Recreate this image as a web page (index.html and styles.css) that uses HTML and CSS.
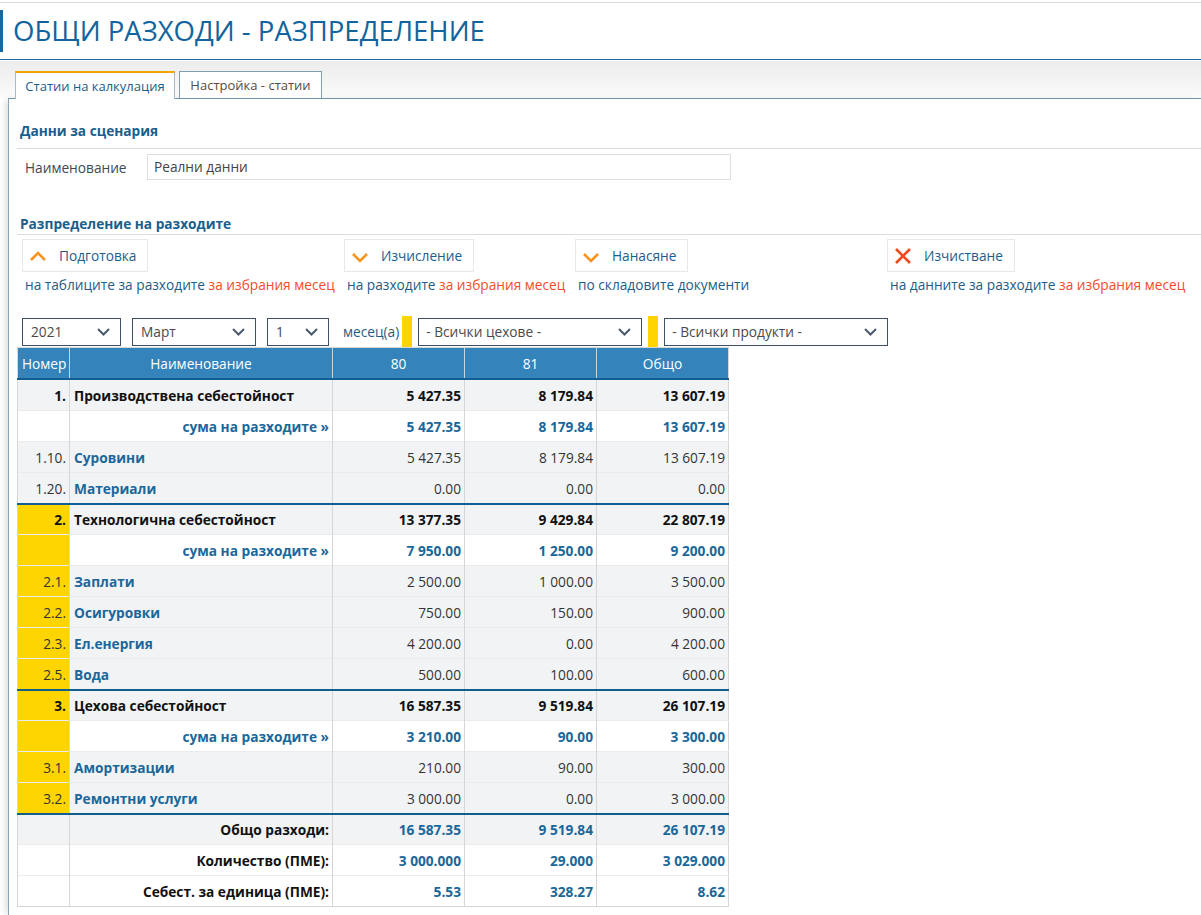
FILE: index.html
```html
<!DOCTYPE html>
<html lang="bg">
<head>
<meta charset="utf-8">
<title>Общи разходи - разпределение</title>
<link rel="stylesheet" href="styles.css">
</head>
<body>
<div class="page">
  <header class="header">
    <h1 class="title">ОБЩИ РАЗХОДИ - РАЗПРЕДЕЛЕНИЕ</h1>
  </header>
  <div class="tabbar">
    <div class="tab tab-active">Статии на калкулация</div>
    <div class="tab tab-2">Настройка - статии</div>
  </div>
  <div class="panel">
    <div class="section-title">Данни за сценария</div>
    <div class="form-row">
      <label class="form-label">Наименование</label>
      <div class="input">Реални данни</div>
    </div>

    <div class="section-title section-2">Разпределение на разходите</div>
    <div class="actions">
      <div class="action">
        <div class="btn"><svg class="ico" width="18" height="12" viewBox="0 0 18 12"><path d="M2 10 L9 3 L16 10" fill="none" stroke="#f7941d" stroke-width="2.6"/></svg>Подготовка</div>
        <div class="desc">на таблиците за разходите <span class="red">за избрания месец</span></div>
      </div>
      <div class="action">
        <div class="btn"><svg class="ico down" width="18" height="12" viewBox="0 0 18 12"><path d="M2 2 L9 9 L16 2" fill="none" stroke="#f7941d" stroke-width="2.6"/></svg>Изчисление</div>
        <div class="desc">на разходите <span class="red">за избрания месец</span></div>
      </div>
      <div class="action">
        <div class="btn"><svg class="ico down" width="18" height="12" viewBox="0 0 18 12"><path d="M2 2 L9 9 L16 2" fill="none" stroke="#f7941d" stroke-width="2.6"/></svg>Нанасяне</div>
        <div class="desc">по складовите документи</div>
      </div>
      <div class="action">
        <div class="btn"><svg class="ico" width="18" height="18" viewBox="0 0 18 18"><path d="M2 2 L16 16 M16 2 L2 16" fill="none" stroke="#f04a23" stroke-width="2.6"/></svg>Изчистване</div>
        <div class="desc">на данните за разходите <span class="red">за избрания месец</span></div>
      </div>
    </div>

    <div class="filters">
      <div class="select sel-year">2021<svg class="chev" width="13" height="8" viewBox="0 0 13 8"><path d="M1 1 L6.5 6.5 L12 1" fill="none" stroke="#4a5a6c" stroke-width="2"/></svg></div>
      <div class="select sel-month">Март<svg class="chev" width="13" height="8" viewBox="0 0 13 8"><path d="M1 1 L6.5 6.5 L12 1" fill="none" stroke="#4a5a6c" stroke-width="2"/></svg></div>
      <div class="select sel-count">1<svg class="chev" width="13" height="8" viewBox="0 0 13 8"><path d="M1 1 L6.5 6.5 L12 1" fill="none" stroke="#4a5a6c" stroke-width="2"/></svg></div>
      <span class="months">месец(а)</span>
      <span class="ybar"></span>
      <div class="select sel-wide">- Всички цехове -<svg class="chev" width="13" height="8" viewBox="0 0 13 8"><path d="M1 1 L6.5 6.5 L12 1" fill="none" stroke="#4a5a6c" stroke-width="2"/></svg></div>
      <span class="ybar"></span>
      <div class="select sel-wide">- Всички продукти -<svg class="chev" width="13" height="8" viewBox="0 0 13 8"><path d="M1 1 L6.5 6.5 L12 1" fill="none" stroke="#4a5a6c" stroke-width="2"/></svg></div>
    </div>

    <table class="grid">
      <colgroup>
        <col class="c-num"><col class="c-name"><col class="c-val"><col class="c-val"><col class="c-val">
      </colgroup>
      <thead>
        <tr><th class="th-num">Номер</th><th>Наименование</th><th>80</th><th>81</th><th>Общо</th></tr>
      </thead>
      <tbody>
        <tr class="grp"><td class="num">1.</td><td>Производствена себестойност</td><td class="v">5 427.35</td><td class="v">8 179.84</td><td class="v">13 607.19</td></tr>
        <tr class="sum"><td class="num"></td><td class="r">сума на разходите »</td><td class="v">5 427.35</td><td class="v">8 179.84</td><td class="v">13 607.19</td></tr>
        <tr class="item"><td class="num">1.10.</td><td class="lnk">Суровини</td><td class="v">5 427.35</td><td class="v">8 179.84</td><td class="v">13 607.19</td></tr>
        <tr class="item"><td class="num">1.20.</td><td class="lnk">Материали</td><td class="v">0.00</td><td class="v">0.00</td><td class="v">0.00</td></tr>

        <tr class="grp sep"><td class="num y">2.</td><td>Технологична себестойност</td><td class="v">13 377.35</td><td class="v">9 429.84</td><td class="v">22 807.19</td></tr>
        <tr class="sum"><td class="num y"></td><td class="r">сума на разходите »</td><td class="v">7 950.00</td><td class="v">1 250.00</td><td class="v">9 200.00</td></tr>
        <tr class="item"><td class="num y">2.1.</td><td class="lnk">Заплати</td><td class="v">2 500.00</td><td class="v">1 000.00</td><td class="v">3 500.00</td></tr>
        <tr class="item"><td class="num y">2.2.</td><td class="lnk">Осигуровки</td><td class="v">750.00</td><td class="v">150.00</td><td class="v">900.00</td></tr>
        <tr class="item"><td class="num y">2.3.</td><td class="lnk">Ел.енергия</td><td class="v">4 200.00</td><td class="v">0.00</td><td class="v">4 200.00</td></tr>
        <tr class="item"><td class="num y">2.5.</td><td class="lnk">Вода</td><td class="v">500.00</td><td class="v">100.00</td><td class="v">600.00</td></tr>

        <tr class="grp sep"><td class="num y">3.</td><td>Цехова себестойност</td><td class="v">16 587.35</td><td class="v">9 519.84</td><td class="v">26 107.19</td></tr>
        <tr class="sum"><td class="num y"></td><td class="r">сума на разходите »</td><td class="v">3 210.00</td><td class="v">90.00</td><td class="v">3 300.00</td></tr>
        <tr class="item"><td class="num y">3.1.</td><td class="lnk">Амортизации</td><td class="v">210.00</td><td class="v">90.00</td><td class="v">300.00</td></tr>
        <tr class="item"><td class="num y">3.2.</td><td class="lnk">Ремонтни услуги</td><td class="v">3 000.00</td><td class="v">0.00</td><td class="v">3 000.00</td></tr>

        <tr class="foot gray sep"><td class="num"></td><td class="r">Общо разходи:</td><td class="v">16 587.35</td><td class="v">9 519.84</td><td class="v">26 107.19</td></tr>
        <tr class="foot"><td class="num"></td><td class="r">Количество (ПМЕ):</td><td class="v">3 000.000</td><td class="v">29.000</td><td class="v">3 029.000</td></tr>
        <tr class="foot"><td class="num"></td><td class="r">Себест. за единица (ПМЕ):</td><td class="v">5.53</td><td class="v">328.27</td><td class="v">8.62</td></tr>
      </tbody>
    </table>
  </div>
</div>
</body>
</html>
```

FILE: styles.css
```css
html, body {
  margin: 0;
  padding: 0;
  background: #fff;
}
body {
  font-family: "Open Sans", "Noto Sans", sans-serif;
  font-size: 13.7px;
  color: #333;
}
.page {
  margin-top: 2px;
  border-top: 1px solid #dcdcdc;
}
.header {
  height: 57px;
  border-bottom: 1px solid #1d6aa0;
  box-sizing: border-box;
  padding-top: 7px;
}
.title {
  margin: 0;
  height: 42px;
  line-height: 42px;
  border-left: 3px solid #1569a3;
  padding-left: 10px;
  font-size: 27.5px;
  font-weight: 400;
  color: #11649d;
}
.tabbar {
  height: 37px;
  box-sizing: border-box;
  background: linear-gradient(#ececec, #fbfbfb);
  display: flex;
  align-items: flex-end;
  gap: 4px;
  padding-left: 15px;
  margin-top: 1px;
}
.tab {
  height: 27px;
  box-sizing: border-box;
  border: 1px solid #7f9fb0;
  border-bottom: none;
  background: #fff;
  padding: 0;
  text-align: center;
  white-space: nowrap;
  line-height: 27px;
  font-size: 13px;
  color: #5b4a40;
}
.tab-active {
  border-top: 2px solid #f5a500;
  border-left-color: #a9bcc6;
  border-right-color: #a9bcc6;
  color: #1d5d8a;
  line-height: 26px;
  position: relative;
  top: 1px;
  height: 28px;
  width: 160px;
}
.tab-2 {
  width: 143px;
}
.panel {
  margin-left: 8px;
  border-top: 1px solid #6f96a8;
  border-left: 1px solid #8aa6b6;
  box-shadow: -5px 0 6px -2px rgba(0,0,0,0.12);
  padding-bottom: 9px;
  min-height: 808px;
  box-sizing: border-box;
}
.section-title {
  margin-left: 8px;
  padding: 22px 0 7px 3px;
  border-bottom: 1px solid #dcdcdc;
  font-weight: 700;
  font-size: 13.7px;
  color: #1a5e8d;
  line-height: 20px;
}
.section-2 {
  padding-top: 34px;
  padding-bottom: 0;
}
.form-row {
  display: flex;
  align-items: center;
  margin-top: 5px;
  padding-left: 16px;
}
.form-label {
  width: 122px;
  color: #3d4a55;
}
.input {
  width: 584px;
  height: 26px;
  box-sizing: border-box;
  border: 1px solid #dedede;
  padding-left: 6px;
  line-height: 24px;
  color: #444;
}
.actions {
  display: grid;
  grid-template-columns: 322px 231px 312px 1fr;
  margin-left: 13px;
  margin-top: 4px;
}
.btn {
  display: inline-flex;
  align-items: center;
  height: 33px;
  box-sizing: border-box;
  border: 1px solid #e8e8e8;
  padding: 0 11px 0 6px;
  color: #1d5d8a;
}
.ico {
  margin-right: 12px;
  flex: none;
}
.ico.down {
  position: relative;
  top: 2px;
}
.desc {
  margin-top: 2px;
  padding-left: 3px;
  color: #1f5c87;
  line-height: 22px;
  white-space: nowrap;
}
.red {
  color: #f24c2b;
}
.filters {
  display: flex;
  align-items: center;
  margin-left: 13px;
  margin-top: 20px;
  height: 31px;
}
.select {
  display: flex;
  align-items: center;
  justify-content: space-between;
  height: 28px;
  box-sizing: border-box;
  border: 1px solid #3d4f66;
  padding: 0 10px 0 8px;
  color: #4a4a4a;
}
.sel-year { width: 99px; }
.sel-month { width: 124px; margin-left: 11px; }
.sel-count { width: 62px; margin-left: 11px; }
.sel-wide { width: 224px; margin-left: 6px; padding-left: 7px; }
.months {
  margin-left: 14px;
  color: #1f5c87;
}
.ybar {
  width: 10px;
  height: 31px;
  background: #ffd400;
  margin-left: 3px;
}
.sel-wide + .ybar { margin-left: 6px; }
.grid {
  border-collapse: collapse;
  margin-left: 8px;
  margin-top: 0;
  table-layout: fixed;
  width: 712px;
  border: 1px solid #d6d6d6;
}
.c-num { width: 52px; }
.c-name { width: 263px; }
.c-val { width: 132px; }
.grid th {
  background: #3484bb;
  color: #fff;
  font-weight: 400;
  height: 30px;
  padding: 0;
  border-left: 1px solid #c8d6e0;
  border-bottom: 2px solid #125e93;
  text-align: center;
}
.grid th.th-num {
  text-align: left;
  padding-left: 4px;
  border-left: none;
}
.grid td {
  height: 30px;
  padding: 0 3px 0 4px;
  border-left: 1px solid #d6d6d6;
  border-top: 1px solid #ebebeb;
  white-space: nowrap;
  overflow: hidden;
}
.grid td.num {
  text-align: right;
  padding-right: 3px;
  padding-left: 0;
}
.grid td.v,
.grid td.r {
  text-align: right;
  padding-right: 3px;
}
.grid tr.grp td,
.grid tr.item td {
  background: #f2f3f5;
}
.grid tr.sum td,
.grid tr.foot td {
  background: #fff;
}
.grid tr.foot.gray td {
  background: #f2f3f5;
}
.grid tr.sep td {
  border-top: 2px solid #125e93;
  height: 29px;
}
.grid tr.grp td {
  font-weight: 700;
  color: #111;
}
.grid tr.sum td {
  font-weight: 700;
  color: #1b679a;
}
.grid td.lnk {
  font-weight: 700;
  color: #1b679a;
}
.grid tr.item td.num,
.grid tr.item td.v {
  color: #333;
}
.grid tr.foot td.r {
  font-weight: 700;
  color: #111;
}
.grid tr.foot td.v {
  font-weight: 700;
  color: #1b679a;
}
.grid td.num.y {
  background: #ffd500;
}
```
